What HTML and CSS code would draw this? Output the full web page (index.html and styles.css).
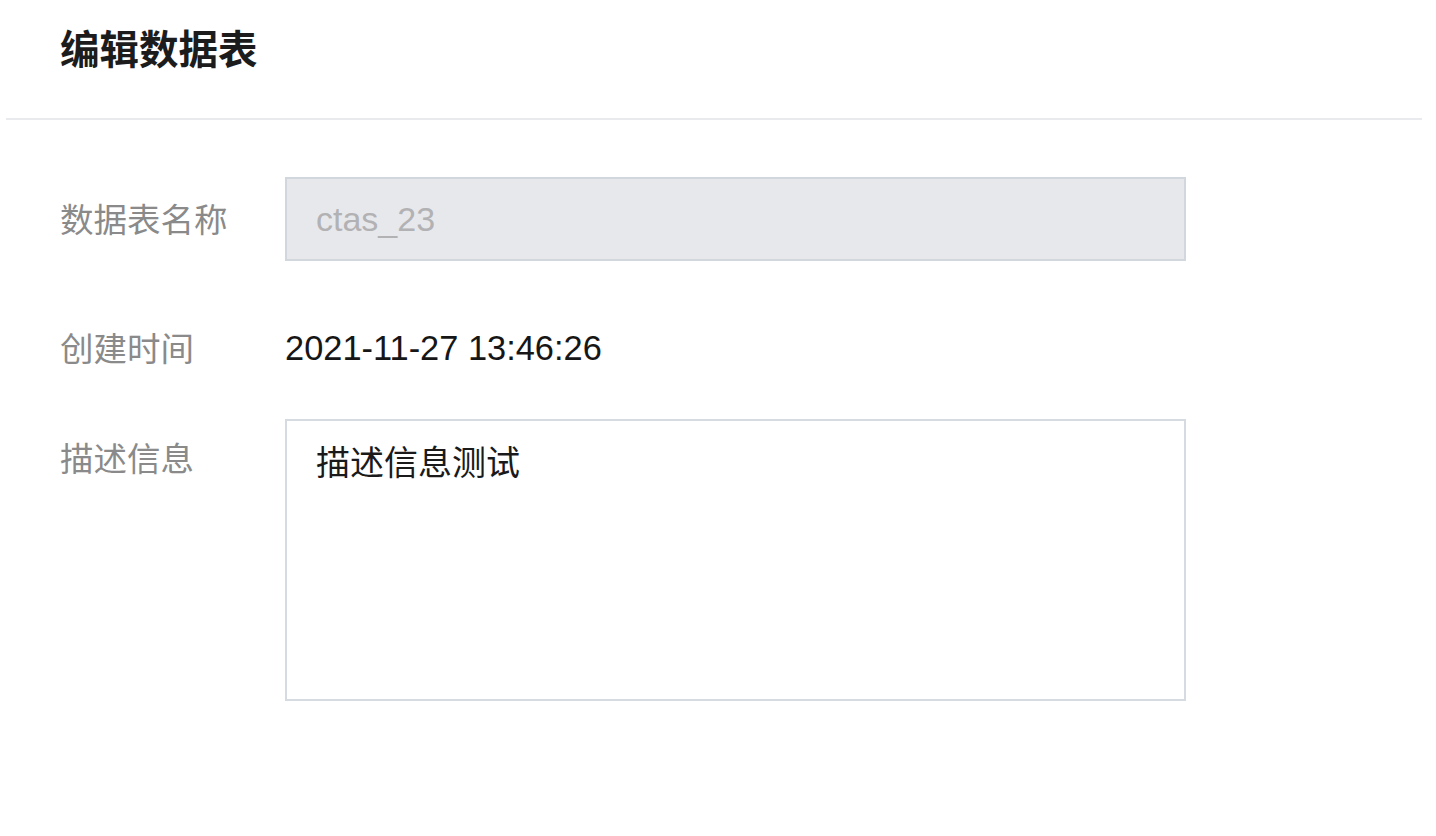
FILE: index.html
```html
<!DOCTYPE html>
<html lang="zh-CN">
<head>
<meta charset="utf-8">
<title>编辑数据表</title>
<link rel="stylesheet" href="styles.css">
</head>
<body>
<div class="page">
  <header class="header">
    <h1 class="title">编辑数据表</h1>
  </header>
  <form class="form">
    <div class="row row-name">
      <label class="label">数据表名称</label>
      <input class="input" type="text" value="ctas_23" readonly>
    </div>
    <div class="row row-time">
      <span class="label">创建时间</span>
      <span class="value">2021-11-27 13:46:26</span>
    </div>
    <div class="row row-desc">
      <label class="label label-top">描述信息</label>
      <textarea class="textarea">描述信息测试</textarea>
    </div>
  </form>
</div>
</body>
</html>
```
FILE: styles.css
```css
* { box-sizing: border-box; }
html, body {
  margin: 0;
  padding: 0;
  background: #ffffff;
}
body {
  font-family: "Liberation Sans", "Noto Sans CJK SC", sans-serif;
  width: 1436px;
  height: 836px;
  overflow: hidden;
}
.page {
  width: 100%;
}
.header {
  margin: 0 14px 0 6px;
  padding: 27px 0 51px 54px;
  border-bottom: 2px solid #e8eaee;
}
.title {
  margin: 0;
  font-family: "Noto Sans CJK SC", "Liberation Sans", sans-serif;
  font-size: 39.5px;
  line-height: 40px;
  font-weight: 700;
  color: #1c1c1c;
}
.form {
  padding: 57px 0 0 60px;
  margin: 0;
}
.row {
  display: flex;
  align-items: center;
}
.label {
  width: 225px;
  flex: none;
  font-family: "Noto Sans CJK SC", "Liberation Sans", sans-serif;
  font-size: 33.5px;
  line-height: 40px;
  color: #8a8a8a;
  padding-bottom: 2px;
}
.input {
  width: 901px;
  height: 84px;
  margin: 0;
  padding: 0 0 0 29px;
  border: 2px solid #d2d6dd;
  border-radius: 0;
  background: #e7e8ec;
  font-family: "Liberation Sans", "Noto Sans CJK SC", sans-serif;
  font-size: 34px;
  color: #b2b2b4;
  outline: none;
}
.row-time {
  margin-top: 66px;
}
.value {
  font-family: "Liberation Sans", "Noto Sans CJK SC", sans-serif;
  font-size: 34.4px;
  line-height: 40px;
  color: #161616;
}
.row-desc {
  margin-top: 50px;
  align-items: flex-start;
}
.label-top {
  padding-top: 18px;
}
.textarea {
  width: 901px;
  height: 282px;
  margin: 0;
  padding: 20px 29px;
  border: 2px solid #d6dae1;
  border-radius: 0;
  background: #ffffff;
  font-family: "Noto Sans CJK SC", "Liberation Sans", sans-serif;
  font-size: 34px;
  line-height: 40px;
  color: #1a1a1a;
  resize: none;
  outline: none;
  overflow: hidden;
}
```
